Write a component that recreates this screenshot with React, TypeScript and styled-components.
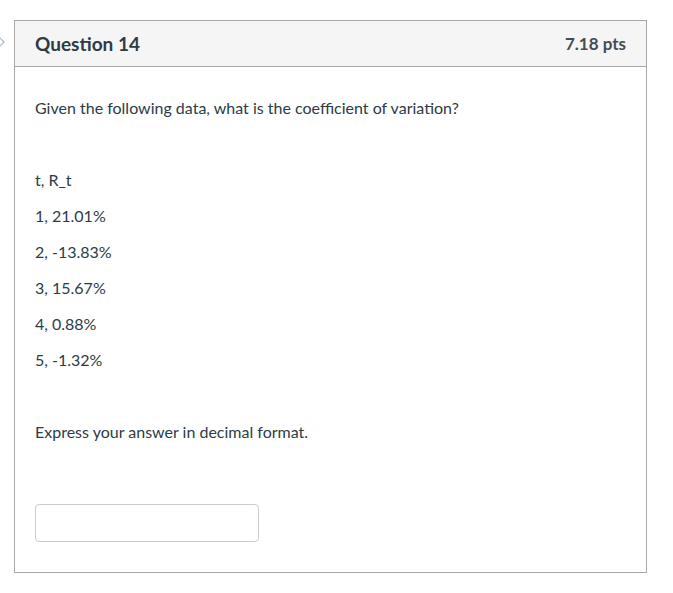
import React, { FC } from 'react';
import styled, { createGlobalStyle } from 'styled-components';

const GlobalStyle = createGlobalStyle`
  body {
    margin: 0;
    background: #ffffff;
    font-family: Lato, 'Noto Sans', sans-serif;
    color: #2d3b45;
  }
`;

const Page = styled.div`
  position: relative;
  padding: 20px 25px 0 14px;
`;

const Marker = styled.svg`
  position: absolute;
  left: -6px;
  top: 33px;
`;

const Card = styled.div`
  width: 633px;
  border: 1px solid #a8a8a8;
  box-sizing: border-box;
`;

const Header = styled.div`
  display: flex;
  justify-content: space-between;
  align-items: center;
  height: 45px;
  padding: 0 20px 0 20px;
  background: #f5f5f5;
  border-bottom: 1px solid #a8a8a8;
`;

const Title = styled.h2`
  margin: 0;
  font-size: 19px;
  font-weight: 700;
  color: #2d3b45;
`;

const Points = styled.span`
  font-size: 17px;
  font-weight: 700;
  color: #444c52;
`;

const Body = styled.div`
  padding: 15px 20px 30px 20px;
`;

const Line = styled.p`
  margin: 16px 0;
  font-size: 16px;
  line-height: 20px;
  min-height: 20px;
`;

const AnswerInput = styled.input`
  display: block;
  width: 224px;
  height: 38px;
  box-sizing: border-box;
  margin-top: 26px;
  border: 1px solid #c7cdd1;
  border-radius: 4px;
  background: #fff;
`;

const rows = ['t, R_t', '1, 21.01%', '2, -13.83%', '3, 15.67%', '4, 0.88%', '5, -1.32%'];

const App: FC = () => (
  <>
    <GlobalStyle />
    <Page>
      <Marker width="12" height="18" viewBox="0 0 12 18">
        <path d="M2 1 L10 9 L2 17" fill="none" stroke="#a9b8c4" strokeWidth="1.2" />
      </Marker>
      <Card>
        <Header>
          <Title>Question 14</Title>
          <Points>7.18 pts</Points>
        </Header>
        <Body>
          <Line>Given the following data, what is the coefficient of variation?</Line>
          <Line />
          {rows.map((r) => (
            <Line key={r}>{r}</Line>
          ))}
          <Line />
          <Line>Express your answer in decimal format.</Line>
          <Line />
          <AnswerInput type="text" />
        </Body>
      </Card>
    </Page>
  </>
);

export default App;
